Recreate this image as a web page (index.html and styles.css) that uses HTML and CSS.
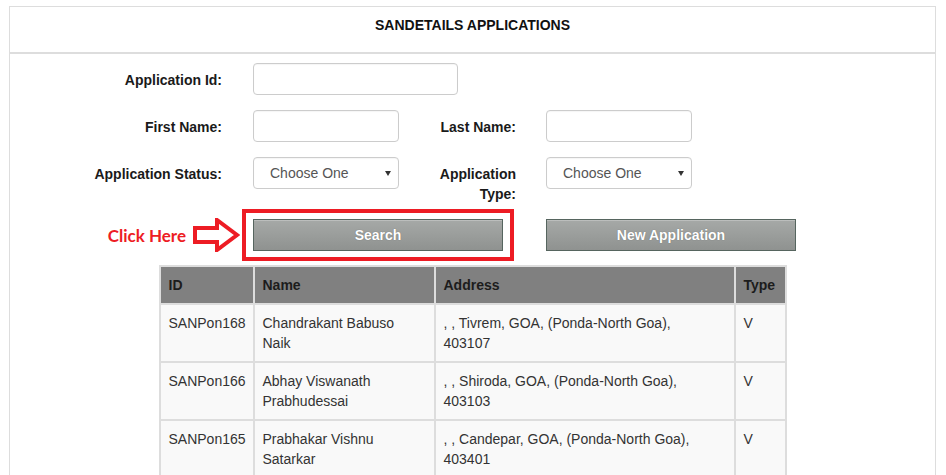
FILE: index.html
```html
<!DOCTYPE html>
<html>
<head>
<meta charset="utf-8">
<title>SANDETAILS APPLICATIONS</title>
<link rel="stylesheet" href="styles.css">
</head>
<body>
<div class="page">
  <div class="panel">
    <div class="panel-head">SANDETAILS APPLICATIONS</div>
    <div class="panel-body">
      <form class="form">
        <div class="row">
          <label class="lbl lbl-main">Application Id:</label>
          <input class="ctl ctl-wide" type="text">
        </div>
        <div class="row">
          <label class="lbl lbl-main">First Name:</label>
          <input class="ctl" type="text">
          <label class="lbl lbl-side">Last Name:</label>
          <input class="ctl" type="text">
        </div>
        <div class="row row-tall">
          <label class="lbl lbl-main">Application Status:</label>
          <span class="sel"><select class="ctl ctl-select"><option>Choose One</option></select></span>
          <label class="lbl lbl-side">Application Type:</label>
          <span class="sel"><select class="ctl ctl-select"><option>Choose One</option></select></span>
        </div>
        <div class="row row-actions">
          <div class="hint">
            <span class="hint-text">Click Here</span>
            <svg class="hint-arrow" width="48" height="34" viewBox="0 0 48 34">
              <polygon points="3,10 25,10 25,2 45,17 25,32 25,24 3,24" fill="#fff" stroke="#ed1c24" stroke-width="4" stroke-linejoin="miter"/>
            </svg>
          </div>
          <div class="highlight">
            <button type="button" class="btn btn-search">Search</button>
          </div>
          <button type="button" class="btn btn-new">New Application</button>
        </div>
      </form>
      <table class="grid">
        <colgroup>
          <col class="c-id">
          <col class="c-name">
          <col class="c-addr">
          <col class="c-type">
        </colgroup>
        <thead>
          <tr><th>ID</th><th>Name</th><th>Address</th><th>Type</th></tr>
        </thead>
        <tbody>
          <tr><td>SANPon168</td><td>Chandrakant Babuso Naik</td><td class="addr">, , Tivrem, GOA, (Ponda-North Goa), 403107</td><td>V</td></tr>
          <tr><td>SANPon166</td><td>Abhay Viswanath Prabhudessai</td><td class="addr">, , Shiroda, GOA, (Ponda-North Goa), 403103</td><td>V</td></tr>
          <tr><td>SANPon165</td><td>Prabhakar Vishnu Satarkar</td><td class="addr">, , Candepar, GOA, (Ponda-North Goa), 403401</td><td>V</td></tr>
        </tbody>
      </table>
    </div>
  </div>
</div>
</body>
</html>
```
FILE: styles.css
```css
html, body {
  margin: 0;
  padding: 0;
  background: #fff;
}
body {
  font-family: "Liberation Sans", Arial, sans-serif;
  font-size: 14px;
  color: #333;
  overflow: hidden;
}
.page {
  padding: 6px 10px 0 9px;
}
.panel {
  border: 1px solid #ddd;
  border-bottom: none;
  min-height: 480px;
}
.panel-head {
  height: 37px;
  padding-top: 8px;
  line-height: 20px;
  text-align: center;
  font-weight: bold;
  font-size: 14px;
  color: #111;
  border-bottom: 2px solid #ddd;
}
.panel-body {
  padding-top: 9px;
}
.form {
  margin: 0;
}
.row {
  display: flex;
  align-items: flex-start;
  margin-bottom: 15px;
}
.row-tall {
  margin-bottom: 5px;
}
.lbl {
  display: block;
  box-sizing: border-box;
  padding-top: 7px;
  line-height: 20px;
  font-weight: bold;
  font-size: 14px;
  color: #1a1a1a;
  text-align: right;
}
.lbl-main {
  width: 212px;
  margin-right: 31px;
}
.lbl-side {
  width: 85px;
  margin-left: 32px;
  margin-right: 30px;
}
.ctl {
  display: block;
  box-sizing: border-box;
  width: 146px;
  height: 32px;
  margin: 0;
  padding: 0 12px;
  border: 1px solid #ccc;
  border-radius: 4px;
  background: #fff;
  font-family: "Liberation Sans", Arial, sans-serif;
  font-size: 14px;
  color: #555;
  box-shadow: inset 0 1px 1px rgba(0,0,0,0.04);
}
.ctl-wide {
  width: 205px;
}
.sel {
  position: relative;
  display: block;
}
.ctl-select {
  -webkit-appearance: none;
  appearance: none;
  padding-left: 16px;
  color: #555;
}
.sel::after {
  content: "";
  position: absolute;
  right: 8px;
  top: 14px;
  border-left: 3.5px solid transparent;
  border-right: 3.5px solid transparent;
  border-top: 5px solid #333;
  pointer-events: none;
}
.row-actions {
  align-items: center;
  margin-bottom: 4px;
}
.hint {
  width: 232px;
  display: flex;
  justify-content: flex-end;
  align-items: center;
}
.hint-text {
  font-family: Lato, "Open Sans", sans-serif;
  font-weight: 700;
  font-size: 17px;
  color: #ed1c24;
  margin-right: 6px;
}
.hint-arrow {
  display: block;
  margin-right: 2px;
}
.highlight {
  border: 4px solid #ed1c24;
  padding: 6px 7px;
}
.btn {
  display: block;
  box-sizing: border-box;
  width: 250px;
  height: 32px;
  margin: 0;
  border: 1px solid #56655f;
  background: linear-gradient(#a6a9a7, #8f9290);
  box-shadow: inset 0 1px 0 rgba(255,255,255,0.25);
  color: #fff;
  font-family: "Liberation Sans", Arial, sans-serif;
  font-weight: bold;
  font-size: 14px;
  text-shadow: 0 0 1px rgba(0,0,0,0.35);
}
.btn-new {
  margin-left: 32px;
}
.grid {
  margin: 0 auto;
  width: 628px;
  table-layout: fixed;
  border-collapse: collapse;
}
.c-id { width: 94px; }
.c-name { width: 181px; }
.c-addr { width: 300px; }
.c-type { width: 51px; }
.grid th,
.grid td {
  border: 2px solid #ddd;
  padding: 8px 8px;
  line-height: 20px;
  text-align: left;
  vertical-align: top;
  font-size: 14px;
}
.grid td.addr {
  padding-right: 16px;
}
.grid th {
  background: #808080;
  color: #1c1c1c;
  font-weight: bold;
}
.grid td {
  background: #f9f9f9;
  color: #333;
}
```
